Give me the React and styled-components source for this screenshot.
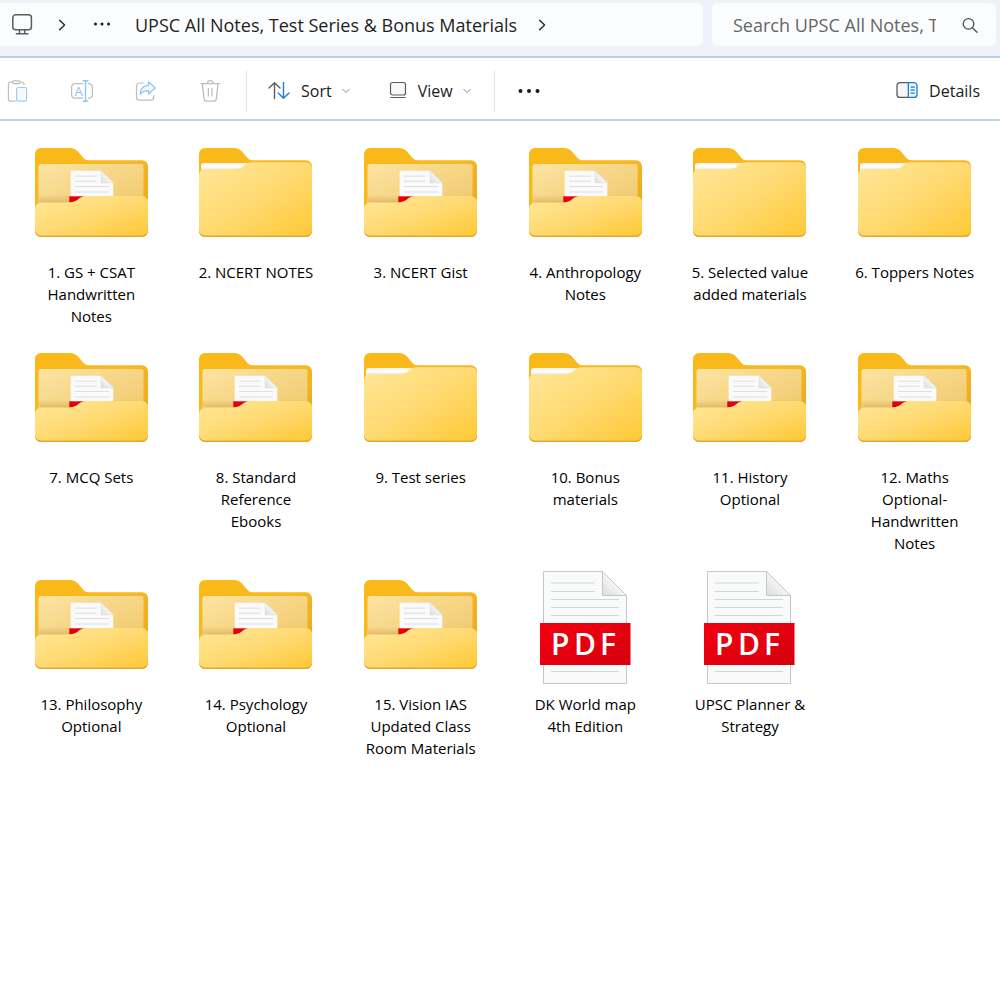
import React from 'react'
import styled, { createGlobalStyle } from 'styled-components'

const GlobalStyle = createGlobalStyle`
  * {
    box-sizing: border-box;
  }
  body {
    margin: 0;
    background: #fff;
    color: #1b1b1b;
    font-family: 'Open Sans', 'Noto Sans', sans-serif;
  }
  button, input {
    font-family: inherit;
    color: inherit;
  }
`

const AddressRow = styled.header`
  display: flex;
  gap: 9px;
  height: 58px;
  padding: 3px 4px 10px 0;
  background: #eff3f9;
  border-bottom: 2px solid #c1cedd;
`

const Breadcrumb = styled.nav`
  flex: 1;
  display: flex;
  align-items: center;
  padding-left: 10px;
  background: #fbfcfe;
  border-radius: 0 6px 6px 0;
`

const CrumbButton = styled.button`
  display: flex;
  align-items: center;
  justify-content: center;
  width: ${props => props.$width || 24}px;
  height: 32px;
  margin-right: ${props => props.$gap || 0}px;
  padding: 0;
  border: 0;
  background: none;
`

const CrumbLink = styled.a`
  margin-right: 13px;
  font-size: 18px;
  line-height: 26px;
  color: #1f1f1f;
  text-decoration: none;
  white-space: nowrap;
`

const SearchBox = styled.form`
  display: flex;
  align-items: center;
  width: 284px;
  padding: 0 15px 0 21px;
  background: #fbfcfe;
  border-radius: 6px;
`

const SearchInput = styled.input`
  flex: 1;
  min-width: 0;
  margin-right: 23px;
  padding: 0;
  border: 0;
  outline: 0;
  background: none;
  font-size: 18px;
  line-height: 26px;

  &::placeholder {
    color: #666;
    opacity: 1;
  }
`

const Toolbar = styled.div`
  display: flex;
  align-items: center;
  height: 63px;
  padding: 4px 20px 0 4px;
  border-bottom: 2px solid #c6d1df;
`

const IconGroup = styled.div`
  display: flex;
  gap: 36px;
  margin-right: 22px;
`

const IconButton = styled.button`
  display: flex;
  align-items: center;
  justify-content: center;
  width: 28px;
  height: 32px;
  padding: 0;
  border: 0;
  background: none;
`

const Divider = styled.span`
  width: 1px;
  height: 42px;
  margin-right: 20px;
  background: #e5e5e5;
`

const MenuButton = styled.button`
  display: flex;
  align-items: center;
  gap: 10px;
  margin-right: ${props => props.$gap || 0}px;
  padding: 0;
  border: 0;
  background: none;
  font-size: 16px;
  line-height: 22px;
`

const Spacer = styled.div`
  flex: 1;
`

const FileGrid = styled.ul`
  display: grid;
  grid-template-columns: repeat(6, 1fr);
  row-gap: 17px;
  margin: 0;
  padding: 18px 3px 18px 9px;
  list-style: none;
`

const FileItem = styled.li`
  display: flex;
  justify-content: center;
  align-items: flex-start;
`

const FileButton = styled.button`
  display: flex;
  flex-direction: column;
  align-items: center;
  gap: 9px;
  width: 122px;
  padding: 0;
  border: 0;
  background: none;
`

const FileName = styled.span`
  font-size: 15px;
  line-height: 22px;
  color: #000;
  text-align: center;
`

const MonitorIcon = () => (
  <svg width="24" height="24" viewBox="0 0 24 24" fill="none" stroke="#5c5c5c" strokeWidth="1.5">
    <rect x="2.8" y="1.8" width="18.600" height="15" rx="3" />
    <path d="M9.500 17v3.200M14.700 17v3.200" />
    <path d="M6.300 20.700h11.600" strokeLinecap="round" />
  </svg>
)

const ChevronRight = () => (
  <svg width="12" height="14" viewBox="0 0 12 14" fill="none" stroke="#2b2b2b" strokeWidth="1.5" strokeLinecap="round" strokeLinejoin="round">
    <path d="M3.600 2.200 8.600 7l-5 4.800" />
  </svg>
)

const ChevronDown = () => (
  <svg width="8" height="8" viewBox="0 0 8 8" fill="none" stroke="#8a8a8a" strokeWidth="1" strokeLinecap="round" strokeLinejoin="round">
    <path d="M.7 2.200 4 5.500l3.300-3.300" />
  </svg>
)

const Dots = ({ r, step, cy }) => (
  <svg width="24" height="8" viewBox="0 0 24 8" fill="#1b1b1b">
    <circle cx={12 - step} cy={cy} r={r} />
    <circle cx="12" cy={cy} r={r} />
    <circle cx={12 + step} cy={cy} r={r} />
  </svg>
)

const SearchIcon = () => (
  <svg width="18" height="18" viewBox="0 0 18 18" fill="none" stroke="#4f4f4f" strokeWidth="1.300" strokeLinecap="round">
    <circle cx="7.500" cy="7.900" r="5.300" />
    <path d="m11.400 11.800 4.600 4.400" />
  </svg>
)

const PasteIcon = () => (
  <svg width="24" height="24" viewBox="0 0 24 24" fill="none" strokeWidth="1.200">
    <path d="M9.600 22.200H4.400a2 2 0 0 1-2-2V5a2 2 0 0 1 2-2h2.200M14.200 3h1.800a2 2 0 0 1 2 2v1" stroke="#bdbdbd" />
    <rect x="6.400" y="1.800" width="7.800" height="2.800" rx="1.400" stroke="#bdbdbd" />
    <rect x="10.600" y="8.500" width="10" height="13.700" rx="1.800" fill="#f4faff" stroke="#9dcdf0" />
  </svg>
)

const RenameIcon = () => (
  <svg width="24" height="24" viewBox="0 0 24 24" fill="none" strokeWidth="1.200">
    <path d="M13 19.200H5a3.400 3.400 0 0 1-3.400-3.400V8A3.400 3.400 0 0 1 5 4.600h8M18 4.600h1a3.400 3.400 0 0 1 3.400 3.400v7.800a3.400 3.400 0 0 1-3.400 3.400h-1" stroke="#bdbdbd" />
    <path d="M15.500 2v20M12.700 1.700h5.600M12.700 22.300h5.600" stroke="#8cc5ef" strokeWidth="1.400" />
    <text x="8.600" y="16.500" textAnchor="middle" fontSize="13" fill="#8cc5ef">A</text>
  </svg>
)

const ShareIcon = () => (
  <svg width="24" height="24" viewBox="0 0 24 24" fill="none" strokeWidth="1.200" strokeLinejoin="round" strokeLinecap="round">
    <path d="M9.500 4H5.500A3 3 0 0 0 2.500 7v11.200a3 3 0 0 0 3 3h11.200a3 3 0 0 0 3-3v-1.700" stroke="#bdbdbd" />
    <path d="M14.500 2.900 21.300 9l-6.800 6v-3.400c-4 0-6.500 1.200-8.300 3.700.3-4.900 3.300-8.600 8.300-9.100z" fill="#eff8ff" stroke="#8cc5ef" />
  </svg>
)

const TrashIcon = () => (
  <svg width="24" height="24" viewBox="0 0 24 24" fill="none" stroke="#bdbdbd" strokeWidth="1.300" strokeLinecap="round" strokeLinejoin="round">
    <path d="M2.800 4.600h18.800M9.300 4.500a2.900 2.900 0 0 1 5.800 0M4.400 4.800l1.700 15.300a2.300 2.300 0 0 0 2.300 2h7.600a2.300 2.300 0 0 0 2.300-2L20 4.800M10.400 9.500v7.500M14 9.500v7.500" />
  </svg>
)

const SortIcon = () => (
  <svg width="24" height="20" viewBox="0 0 24 20" fill="none" strokeWidth="1.400" strokeLinecap="round" strokeLinejoin="round">
    <path d="M7.500 17.500V1.700M2 7l5.500-5.300L13 7" stroke="#5c5c5c" />
    <path d="M16.500 1.500v15.700M11.200 12l5.300 5.300L22 12" stroke="#1b7fd6" />
  </svg>
)

const ViewIcon = () => (
  <svg width="20" height="20" viewBox="0 0 20 20" fill="none" stroke="#5c5c5c" strokeWidth="1.200" strokeLinecap="round">
    <rect x="2.500" y="1.500" width="15" height="12.500" rx="2" fill="#f7f7f7" />
    <path d="M2.700 16.500h14.600" />
  </svg>
)

const DetailsIcon = () => (
  <svg width="24" height="20" viewBox="0 0 24 20" fill="none" strokeWidth="1.300">
    <path d="M13.300 1.600H5a3 3 0 0 0-3 3v8.800a3 3 0 0 0 3 3h8.300" fill="#f7f7f7" stroke="#5c5c5c" />
    <path d="M13.300 1.600H19a3 3 0 0 1 3 3v8.800a3 3 0 0 1-3 3h-5.700z" fill="#eaf5ff" stroke="#1b7fd6" />
    <path d="M15.600 6.200h4.200M15.600 9.200h4.200M15.600 12.200h4.200" stroke="#1b7fd6" />
  </svg>
)

// gradients shared by all the file icons
const DefsSvg = styled.svg`
  display: block;
`

const IconDefs = () => (
  <DefsSvg width="0" height="0" aria-hidden="true">
    <defs>
      <linearGradient id="back" x1="0" y1="0" x2="1" y2="1">
        <stop offset="0" stopColor="#fbb917" />
        <stop offset=".5" stopColor="#f8b920" />
        <stop offset="1" stopColor="#e3a11f" />
      </linearGradient>
      <linearGradient id="front" x1="0" y1="0" x2="1" y2="1">
        <stop offset="0" stopColor="#ffe799" />
        <stop offset=".5" stopColor="#ffda72" />
        <stop offset="1" stopColor="#ffc936" />
      </linearGradient>
      <linearGradient id="pocket" x1="0" y1="0" x2="1" y2="1">
        <stop offset="0" stopColor="#fce4a2" />
        <stop offset="1" stopColor="#efc667" />
      </linearGradient>
      <linearGradient id="shade" x1="0" y1="0" x2="0" y2="1">
        <stop offset=".8" stopColor="#c99a40" stopOpacity="0" />
        <stop offset="1" stopColor="#b98a35" stopOpacity=".35" />
      </linearGradient>
      <linearGradient id="paper" x1="0" y1="0" x2="0" y2="1">
        <stop offset="0" stopColor="#f1f1f3" />
        <stop offset=".4" stopColor="#fff" />
        <stop offset=".9" stopColor="#dddde3" />
      </linearGradient>
      <linearGradient id="fold" x1="0" y1="1" x2="1" y2="0">
        <stop offset="0" stopColor="#dcdcdc" />
        <stop offset=".6" stopColor="#fafafa" />
      </linearGradient>
      <linearGradient id="red" x1="0" y1="0" x2="1" y2="1">
        <stop offset="0" stopColor="#f5000f" />
        <stop offset="1" stopColor="#d5000f" />
      </linearGradient>
    </defs>
  </DefsSvg>
)

const FolderBack = () => (
  <path d="M0 15a6 6 0 0 1 6-6h29c3 0 6 1.200 8 3.500L48.500 19c1.500 1.500 3 2.200 5 2.200H107a6 6 0 0 1 6 6V92a6 6 0 0 1-6 6H6a6 6 0 0 1-6-6z" fill="url(#back)" />
)

const EmptyFolder = () => (
  <svg width="113" height="113" viewBox="0 0 113 113">
    <FolderBack />
    <path d="M2 33v-6a3 3 0 0 1 3-3h47l-12 7.500z" fill="url(#paper)" />
    <path d="M0 60h113v32a6 6 0 0 1-6 6H6a6 6 0 0 1-6-6z" fill="#e6a72a" />
    <path d="M0 36a6 6 0 0 1 6-6h30c3.500 0 6-.9 8-2.700l1.500-1.300c2-1.900 4-2.700 7-2.700H107a6 6 0 0 1 6 6V90.500a6 6 0 0 1-6 6H6a6 6 0 0 1-6-6z" fill="url(#front)" />
  </svg>
)

const FullFolder = () => (
  <svg width="113" height="113" viewBox="0 0 113 113">
    <FolderBack />
    <rect x="3.500" y="25" width="105" height="50" rx="2.500" fill="url(#pocket)" />
    <rect x="3.500" y="25" width="105" height="38" rx="2.500" fill="url(#shade)" />
    <path d="M35.700 31.700H66l12.300 12V62H35.700z" fill="#fafafa" />
    <path d="M66 31.700v12h12.300z" fill="url(#fold)" stroke="#d8d8d8" strokeWidth=".5" />
    <path d="M40 37.200h21.500M40 42.200h21.500M40 47.500h34M40 53h34" stroke="#dcdee0" strokeWidth="1" />
    <path d="M34.300 57.300H52V66H34.300z" fill="#e6000f" />
    <path d="M0 69.500a6 6 0 0 1 6-6h28c3.500 0 6-.8 9-3l1.500-1.200c2.500-1.800 4.500-2.300 8-2.300H107a6 6 0 0 1 6 6v29a6 6 0 0 1-6 6H6a6 6 0 0 1-6-6z" fill="#e6a72a" />
    <path d="M0 69.500a6 6 0 0 1 6-6h28c3.500 0 6-.8 9-3l1.500-1.200c2.500-1.800 4.500-2.300 8-2.300H107a6 6 0 0 1 6 6v27.500a6 6 0 0 1-6 6H6a6 6 0 0 1-6-6z" fill="url(#front)" />
  </svg>
)

const PdfIcon = () => (
  <svg width="113" height="113" viewBox="0 0 113 113">
    <path d="M14.500.5h59l24 24v88h-83z" fill="#f9fafa" stroke="#c4c6c8" />
    <path d="M73.500.5v24h24z" fill="url(#fold)" stroke="#c4c6c8" />
    <path d="M22 12h43.500M22 20.500h43.500M22 28.500h68M22 36.500h68M22 44.500h68M22 100.500h68" stroke="#d3d5d6" strokeWidth="1.200" />
    <rect x="11" y="52" width="90.500" height="42" fill="url(#red)" />
    <text x="22 45 71" y="83.500" fontSize="30" fontWeight="600" fill="#fff">PDF</text>
  </svg>
)

const icons = { empty: EmptyFolder, full: FullFolder, pdf: PdfIcon }

const files = [
  { name: '1. GS + CSAT Handwritten Notes', type: 'full' },
  { name: '2. NCERT NOTES', type: 'empty' },
  { name: '3. NCERT Gist', type: 'full' },
  { name: '4. Anthropology Notes', type: 'full' },
  { name: '5. Selected value added materials', type: 'empty' },
  { name: '6. Toppers Notes', type: 'empty' },
  { name: '7. MCQ Sets', type: 'full' },
  { name: '8. Standard Reference Ebooks', type: 'full' },
  { name: '9. Test series', type: 'empty' },
  { name: '10. Bonus materials', type: 'empty' },
  { name: '11. History Optional', type: 'full' },
  { name: '12. Maths Optional-Handwritten Notes', type: 'full' },
  { name: '13. Philosophy Optional', type: 'full' },
  { name: '14. Psychology Optional', type: 'full' },
  { name: '15. Vision IAS Updated Class Room Materials', type: 'full' },
  { name: 'DK World map 4th Edition', type: 'pdf' },
  { name: 'UPSC Planner & Strategy', type: 'pdf' },
]

const File = ({ name, type }) => {
  const Icon = icons[type]
  return (
    <FileItem>
      <FileButton type="button">
        <Icon />
        <FileName>{name}</FileName>
      </FileButton>
    </FileItem>
  )
}

const App = () => (
  <>
    <GlobalStyle />
    <AddressRow>
      <Breadcrumb aria-label="Address">
        <CrumbButton type="button" aria-label="This PC" $gap={16}><MonitorIcon /></CrumbButton>
        <CrumbButton type="button" aria-label="Expand" $gap={16}><ChevronRight /></CrumbButton>
        <CrumbButton type="button" aria-label="More folders" $gap={21}><Dots r={1.5} step={6.5} cy={3} /></CrumbButton>
        <CrumbLink href="#folder">UPSC All Notes, Test Series &amp; Bonus Materials</CrumbLink>
        <CrumbButton type="button" aria-label="Subfolders"><ChevronRight /></CrumbButton>
      </Breadcrumb>
      <SearchBox role="search">
        <SearchInput type="text" aria-label="Search" placeholder="Search UPSC All Notes, Test Series" />
        <CrumbButton type="button" aria-label="Start search" $width={22}><SearchIcon /></CrumbButton>
      </SearchBox>
    </AddressRow>
    <Toolbar>
      <IconGroup>
        <IconButton type="button" aria-label="Paste"><PasteIcon /></IconButton>
        <IconButton type="button" aria-label="Rename"><RenameIcon /></IconButton>
        <IconButton type="button" aria-label="Share"><ShareIcon /></IconButton>
        <IconButton type="button" aria-label="Delete"><TrashIcon /></IconButton>
      </IconGroup>
      <Divider />
      <MenuButton type="button" $gap={38}><SortIcon />Sort<ChevronDown /></MenuButton>
      <MenuButton type="button" $gap={23}><ViewIcon />View<ChevronDown /></MenuButton>
      <Divider />
      <IconButton type="button" aria-label="See more"><Dots r={2} step={8.5} cy={4} /></IconButton>
      <Spacer />
      <MenuButton type="button"><DetailsIcon />Details</MenuButton>
    </Toolbar>
    <main>
      <IconDefs />
      <FileGrid>
        {files.map(file => <File key={file.name} {...file} />)}
      </FileGrid>
    </main>
  </>
)

export default App
